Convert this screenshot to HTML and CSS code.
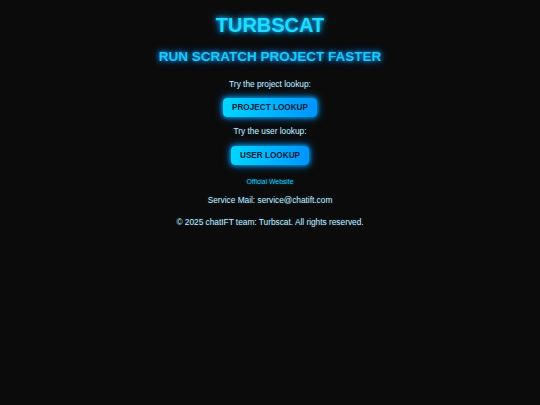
FILE: index.html
```html
<!DOCTYPE html>
<html>
	<head>
		<meta charset="UTF-8">
		<title>Turbscat</title>
		<link rel="stylesheet" href="styles.css">
	</head>
	<body>
		<div class="page">
			<h1 class="title">TURBSCAT</h1>
			<h2 class="subtitle">RUN SCRATCH PROJECT FASTER</h2>
			<p class="hint">Try the project lookup:</p>
			<a class="btn" href="#">PROJECT LOOKUP</a>
			<p class="hint">Try the user lookup:</p>
			<a class="btn" href="#">USER LOOKUP</a>
			<a class="site" href="#">Official Website</a>
			<p class="mail">Service Mail: service@chatift.com</p>
			<p class="copy">© 2025 chatIFT team: Turbscat. All rights reserved.</p>
		</div>
	</body>
</html>
```

FILE: styles.css
```css
html,body{
	margin: 0;
	padding: 0;
	background-color: #0b0b0b;
}
body{
	font-family: "Liberation Sans", Arial, sans-serif;
	color: #cde9f7;
}
.page{
	display: flex;
	flex-direction: column;
	align-items: center;
	padding-top: 13px;
}
.title{
	margin: 0;
	font-size: 20px;
	line-height: 24px;
	font-weight: bold;
	color: #22dcff;
	text-shadow: 0 0 4px #00c8ff, 0 0 8px #0090ff;
}
.subtitle{
	margin: 12px 0 0 0;
	font-size: 13.5px;
	line-height: 16px;
	font-weight: bold;
	color: #1ec8f5;
	text-shadow: 0 0 4px #00a8ff, 0 0 8px #0070e0;
}
.hint{
	margin: 14px 0 0 0;
	font-size: 8.3px;
	line-height: 10px;
	text-shadow: 0 0 3px rgba(0, 160, 255, 0.4);
}
.hint + .btn{
	margin-top: 9px;
}
.btn{
	display: block;
	padding: 4.5px 9px;
	font-size: 8.2px;
	line-height: 10px;
	font-weight: bold;
	color: #0a2035;
	text-decoration: none;
	border-radius: 4px;
	background: linear-gradient(90deg, #00d6ff, #0094ff);
	box-shadow: 0 0 5px #00b8ff, 0 0 10px #0070d0;
}
.btn + .hint{
	margin-top: 9px;
}
.hint + .btn + .hint + .btn{
	margin-top: 10px;
}
.site{
	margin-top: 13px;
	font-size: 6.8px;
	line-height: 8px;
	color: #1ec8f0;
	text-decoration: none;
	text-shadow: 0 0 3px rgba(0, 180, 255, 0.5);
}
.mail{
	margin: 9px 0 0 0;
	font-size: 8.3px;
	line-height: 10px;
	text-shadow: 0 0 3px rgba(0, 160, 255, 0.4);
}
.copy{
	margin: 12px 0 0 0;
	font-size: 8.3px;
	line-height: 10px;
	text-shadow: 0 0 3px rgba(0, 160, 255, 0.4);
}
```
